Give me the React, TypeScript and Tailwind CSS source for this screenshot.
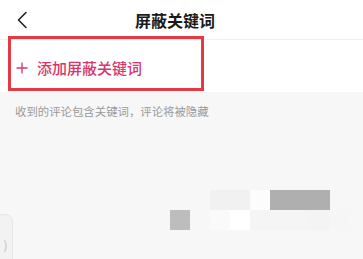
import React from "react";

const mosaic = [
  ["#f7f7f7", "#f7f7f7", "#f1f1f1", "#f1f1f1", "#fcfcfc", "#afafaf", "#afafaf", "#afafaf", "#f7f7f7"],
  ["#bdbdbd", "#f7f7f7", "#fafafa", "#ffffff", "#f5f5f5", "#f5f5f5", "#f5f5f5", "#f4f4f4", "#f6f6f6"],
];

export default function App() {
  return (
    <div
      className="relative w-[363px] h-[259px] overflow-hidden bg-[#f7f7f7] flex flex-col"
      style={{ fontFamily: '"Noto Sans CJK SC", "Noto Sans", sans-serif' }}
    >
      {/* header */}
      <div className="h-[40px] shrink-0 bg-white grid grid-cols-[40px_1fr_40px] items-center border-b border-[#efefef]">
        <div className="flex justify-end pr-[12px]">
          <svg width="12" height="18" viewBox="0 0 12 18" fill="none">
            <path d="M10 1.5 L2.5 9 L10 16.5" stroke="#222" strokeWidth="1.6" strokeLinecap="round" strokeLinejoin="round" />
          </svg>
        </div>
        <span className="text-[16px] leading-none font-bold text-[#1a1a1a] text-center pr-[13px] pt-[1px]">屏蔽关键词</span>
        <div />
      </div>

      {/* add row */}
      <div className="relative h-[52px] shrink-0 bg-white flex items-center pl-[16px] pt-[3px]">
        <svg width="12" height="12" viewBox="0 0 12 12" className="mr-[9px]">
          <path d="M6 0.5 V11.5 M0.5 6 H11.5" stroke="#d8356d" strokeWidth="1.3" />
        </svg>
        <span className="text-[15px] leading-none font-medium text-[#d8356d]">添加屏蔽关键词</span>
        {/* red highlight box overlay */}
        <div className="absolute left-[8px] top-[-4px] w-[196px] h-[55px] border-[3px] border-[#e33a45]" />
      </div>

      {/* description */}
      <div className="pl-[15px] pt-[14px] text-[11.4px] leading-none text-[#9a9a9a]">
        收到的评论包含关键词，评论将被隐藏
      </div>

      {/* lower area with blurred mosaic */}
      <div className="flex-1 flex items-end justify-between">
        <div className="mb-[-3px] ml-[-4px] w-[17px] h-[48px] rounded-tr-[8px] bg-[#f2f2f2] border border-[#e6e6e6] flex items-center justify-center pt-[14px]">
          <span className="text-[12px] text-[#bdbdbd] leading-none pl-[2px]">)</span>
        </div>
        <div className="grid grid-cols-[repeat(9,20px)] mb-[29px] mr-[13px]">
          {mosaic.flat().map((c, i) => (
            <div key={i} className="h-[20px]" style={{ backgroundColor: c }} />
          ))}
        </div>
      </div>
    </div>
  );
}
